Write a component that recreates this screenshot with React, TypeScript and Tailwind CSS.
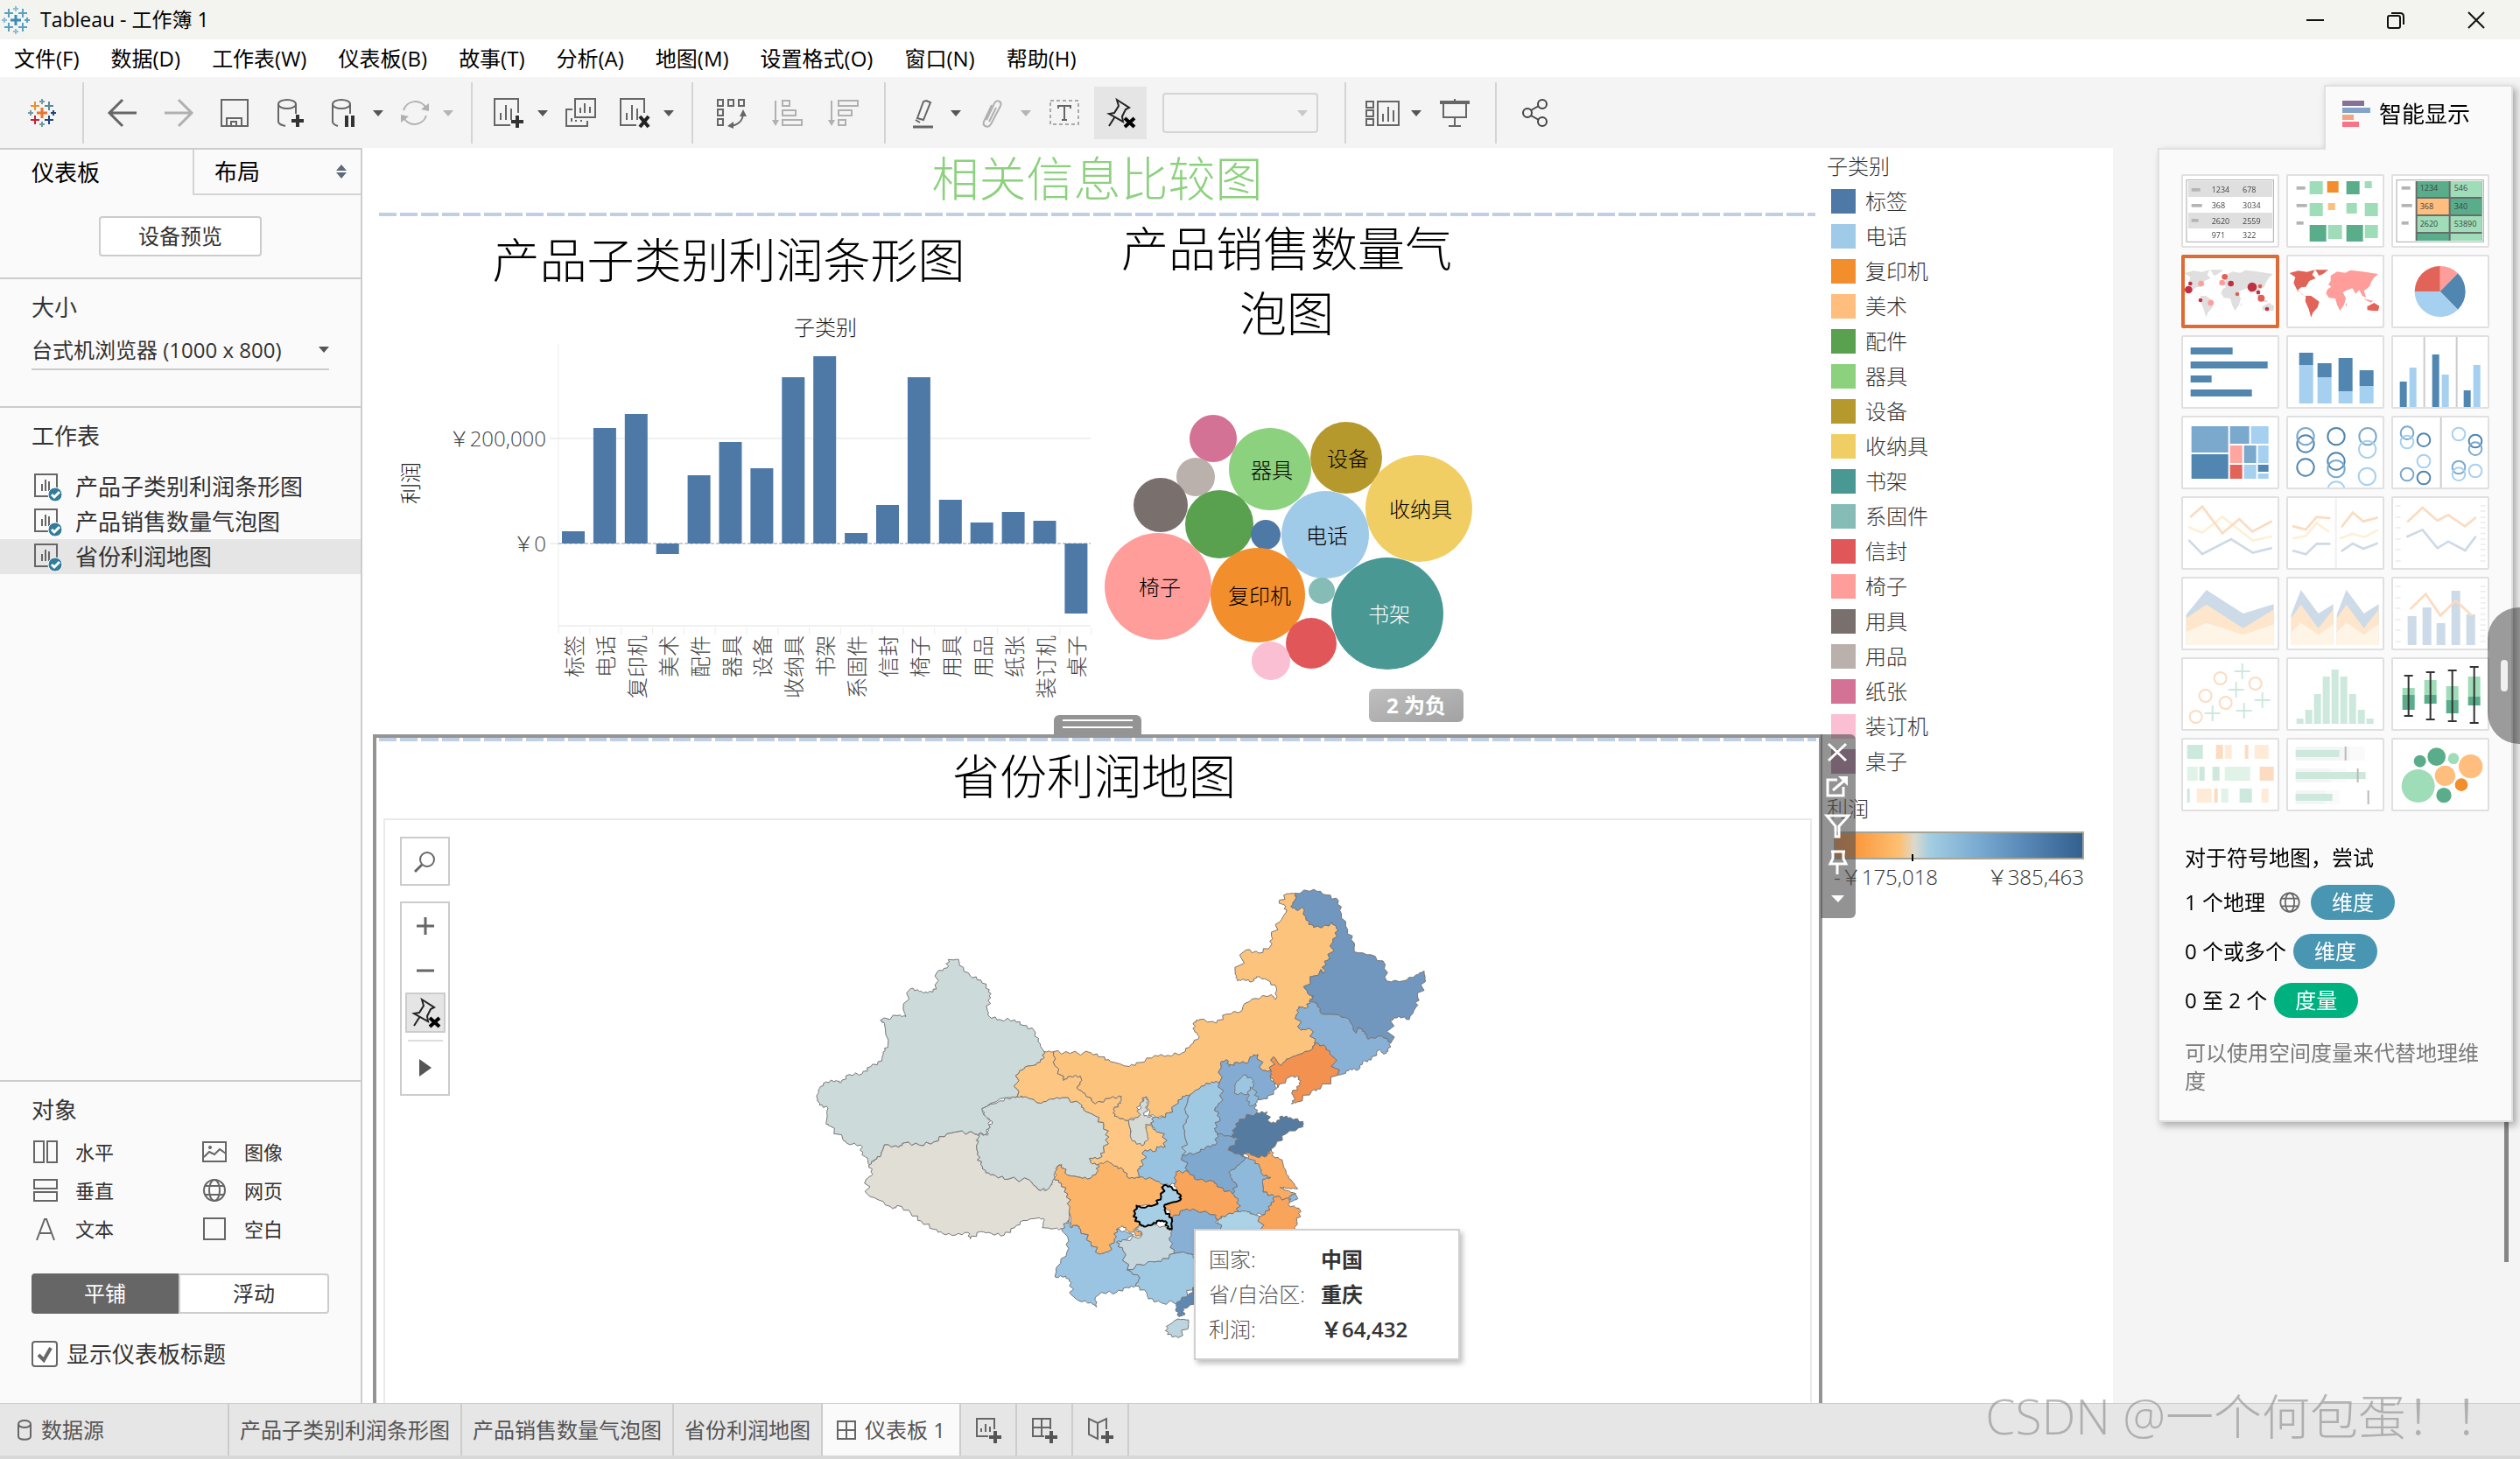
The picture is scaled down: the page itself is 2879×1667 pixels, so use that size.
import { useState } from "react";
import type { ReactNode } from "react";

const DARK = "#59ad8a";
const MINT = "#9fdcb8";
const NAVY = "#5086b0";
const MID = "#7ba9ce";
const SKY = "#a6d0f0";
const PEACH = "#fbdcc0";
const CREAM = "#ffebd8";
const PALE = "#cddae8";
const SAGE = "#cde8dc";

const categories = [
  { name: "标签", color: "#4e79a7", y: 607 },
  { name: "电话", color: "#a0cbe8", y: 489 },
  { name: "复印机", color: "#f28e2b", y: 473 },
  { name: "美术", color: "#ffbe7d", y: 633 },
  { name: "配件", color: "#59a14f", y: 543 },
  { name: "器具", color: "#8cd17d", y: 505 },
  { name: "设备", color: "#b6992d", y: 535 },
  { name: "收纳具", color: "#f1ce63", y: 431 },
  { name: "书架", color: "#499894", y: 407 },
  { name: "系固件", color: "#86bcb6", y: 609 },
  { name: "信封", color: "#e15759", y: 577 },
  { name: "椅子", color: "#ff9d9a", y: 431 },
  { name: "用具", color: "#79706e", y: 571 },
  { name: "用品", color: "#bab0ac", y: 597 },
  { name: "纸张", color: "#d37295", y: 585 },
  { name: "装订机", color: "#fabfd2", y: 595 },
  { name: "桌子", color: "#b07aa1", y: 701 },
];

const bubbles = [
  { x: 1386, y: 501, r: 27, color: "#d37295" },
  { x: 1366, y: 545, r: 22, color: "#bab0ac" },
  { x: 1326, y: 577, r: 31, color: "#79706e" },
  { x: 1451, y: 536, r: 47, color: "#8cd17d", label: "器具" },
  { x: 1538, y: 523, r: 41, color: "#b6992d", label: "设备" },
  { x: 1621, y: 581, r: 61, color: "#f1ce63", label: "收纳具" },
  { x: 1393, y: 599, r: 39, color: "#59a14f" },
  { x: 1446, y: 611, r: 17, color: "#4e79a7" },
  { x: 1514, y: 611, r: 50, color: "#a0cbe8", label: "电话" },
  { x: 1323, y: 670, r: 61, color: "#ff9d9a", label: "椅子" },
  { x: 1437, y: 680, r: 54, color: "#f28e2b", label: "复印机" },
  { x: 1510, y: 675, r: 15, color: "#86bcb6" },
  { x: 1585, y: 701, r: 64, color: "#499894", label: "书架", light: true },
  { x: 1498, y: 735, r: 29, color: "#e15759" },
  { x: 1452, y: 755, r: 22, color: "#fabfd2" },
];

const provinces = [
  { name: "新疆", color: "#ccdada", d: "378,312 403,312 405,330 430,362 455,375 475,405 478,430 470,465 475,488 500,497 535,498 555,515 580,530 590,565 604,596 602,618 585,637 560,643 537,670 541,735 500,742 458,772 460,785 480,808 470,850 440,850 400,844 375,850 345,875 310,885 275,878 262,892 228,884 220,915 205,930 192,955 188,925 175,915 172,885 140,880 130,868 98,825 90,818 95,770 75,762 68,735 75,710 90,690 115,685 125,692 145,667 175,665 195,643 222,625 225,597 236,577 228,510 218,500 260,485 278,488 272,465 290,401 310,410 330,415 350,403 352,350 375,338" },
  { name: "西藏", color: "#e1ded6", d: "228,884 262,892 275,878 310,885 345,875 375,850 400,844 440,850 450,855 445,885 447,915 455,945 467,970 490,980 520,990 570,993 590,1022 610,1024 628,987 645,1003 660,1035 665,1075 663,1115 650,1145 628,1143 600,1140 605,1115 590,1110 555,1118 535,1140 510,1163 480,1158 455,1152 430,1175 425,1155 395,1163 365,1158 345,1145 315,1120 290,1095 260,1072 248,1082 215,1055 190,1040 185,990 200,975 192,945 205,930 220,915" },
  { name: "青海", color: "#cfdbdb", d: "458,772 500,748 530,736 560,735 597,756 620,742 648,738 690,758 698,777 725,795 745,825 757,860 745,900 735,925 712,925 715,940 732,945 728,970 712,988 690,985 660,978 645,945 637,950 630,985 615,1020 590,1022 570,993 520,990 490,980 467,970 455,945 447,915 445,885 452,850 470,855 472,835 482,812 465,795" },
  { name: "甘肃", color: "#fdc783", d: "604,596 627,596 630,640 650,685 665,672 690,672 693,685 682,710 700,725 725,757 760,740 787,735 785,755 768,775 770,795 795,808 803,810 812,865 835,887 845,870 840,820 855,825 870,845 888,850 890,890 870,890 868,903 842,900 838,945 825,960 828,985 805,988 790,960 770,950 755,935 745,945 732,945 715,940 712,925 735,925 745,900 757,860 745,825 725,795 698,777 690,758 648,738 620,742 597,756 560,735 541,735 537,670 560,643 585,637 602,618" },
  { name: "内蒙古", color: "#fcc37d", d: "627,596 665,602 715,600 740,612 760,627 805,642 830,630 865,608 895,608 930,600 950,575 970,550 958,530 958,505 970,497 1010,508 1035,480 1070,470 1075,450 1100,432 1140,420 1150,435 1152,400 1130,375 1105,365 1095,380 1075,373 1060,378 1055,358 1080,282 1110,292 1138,270 1140,240 1160,195 1175,165 1170,143 1158,138 1178,108 1195,107 1198,122 1186,148 1203,160 1213,150 1222,190 1240,213 1275,208 1282,195 1298,222 1285,258 1278,310 1265,318 1262,355 1256,343 1216,395 1230,422 1240,425 1230,440 1222,462 1205,457 1200,480 1210,530 1230,525 1242,570 1235,590 1205,605 1175,620 1162,640 1145,612 1140,657 1120,655 1108,605 1090,612 1085,630 1060,630 1040,642 1035,622 1020,630 1018,690 1000,690 975,703 948,730 930,735 915,760 890,800 850,795 848,740 835,740 825,800 795,808 770,795 768,775 785,755 787,735 760,740 725,757 700,725 682,710 693,685 690,672 665,672 650,685 630,640" },
  { name: "宁夏", color: "#d4dad6", d: "803,810 825,800 830,760 845,735 850,760 840,795 862,800 858,822 843,822 845,840 850,865 835,887 812,872" },
  { name: "黑龙江", color: "#7197bf", d: "1195,107 1240,95 1270,112 1298,130 1305,170 1320,220 1335,260 1335,288 1375,297 1408,327 1412,378 1450,378 1480,360 1500,347 1503,380 1485,430 1480,460 1465,497 1440,487 1420,500 1422,568 1400,548 1368,558 1360,535 1345,520 1340,540 1322,495 1290,482 1258,480 1248,447 1230,440 1240,425 1230,422 1216,395 1256,343 1262,355 1265,318 1278,310 1285,258 1298,222 1282,195 1275,208 1240,213 1222,190 1213,150 1203,160 1186,148 1198,122" },
  { name: "吉林", color: "#89b1d5", d: "1205,457 1222,462 1230,440 1248,447 1258,480 1290,482 1322,495 1340,540 1345,520 1360,535 1368,558 1400,548 1422,568 1415,595 1405,605 1395,590 1375,622 1355,628 1345,652 1325,650 1310,665 1295,670 1283,610 1268,582 1242,570 1230,525 1210,530 1200,480" },
  { name: "辽宁", color: "#f29150", d: "1145,612 1162,640 1175,620 1205,605 1235,590 1242,570 1268,582 1283,610 1295,670 1255,712 1235,718 1200,752 1187,757 1195,740 1188,725 1208,700 1205,675 1185,673 1155,708 1138,675 1140,657" },
  { name: "河北", color: "#84abd2", d: "1035,622 1040,642 1060,630 1085,630 1090,612 1108,605 1120,655 1140,657 1138,675 1153,710 1130,742 1108,745 1100,755 1105,785 1065,805 1052,835 1048,860 1012,850 1005,835 1018,800 1007,770 1025,745 1018,690 1020,630" },
  { name: "北京", color: "#9bc5e1", d: "1055,695 1075,668 1095,682 1098,700 1085,727 1053,725" },
  { name: "天津", color: "#92bcdc", d: "1090,705 1100,715 1108,745 1102,760 1090,765 1083,740" },
  { name: "山西", color: "#9fc8e2", d: "948,730 975,703 1000,690 1018,690 1025,745 1007,770 1018,800 1005,835 1012,850 1008,885 985,892 965,908 930,916 938,870 932,830 943,800 935,775" },
  { name: "陕西", color: "#98c3e0", d: "930,735 948,730 935,775 943,800 932,830 938,870 930,916 945,968 915,968 912,1005 888,1008 860,990 828,985 825,960 838,945 842,900 868,903 870,890 890,890 888,850 870,845 858,822 862,800 890,800 915,760" },
  { name: "河南", color: "#7fa8ce", d: "930,916 965,908 985,892 1008,885 1012,850 1048,860 1065,865 1038,900 1070,918 1080,925 1065,945 1040,970 1048,995 1058,1005 1048,1035 1015,1015 1005,998 965,993 945,968" },
  { name: "山东", color: "#557ba1", d: "1065,805 1105,785 1130,782 1137,815 1152,815 1165,795 1185,800 1215,812 1215,828 1175,850 1150,885 1135,905 1130,918 1105,922 1080,908 1070,918 1038,900 1065,865 1048,860 1052,835" },
  { name: "江苏", color: "#fbab61", d: "1080,908 1105,922 1130,918 1140,900 1145,920 1165,930 1175,975 1190,1000 1202,1020 1180,1018 1160,1015 1175,1025 1198,1035 1185,1055 1148,1045 1120,1030 1120,990 1138,985 1118,975 1112,950 1090,930" },
  { name: "安徽", color: "#8fb9db", d: "1070,918 1095,930 1112,950 1118,975 1138,985 1120,990 1120,1030 1148,1045 1140,1070 1125,1098 1095,1098 1080,1088 1062,1090 1062,1055 1048,1035 1058,1005 1048,995 1040,970 1065,945 1080,925" },
  { name: "浙江", color: "#f9a45b", d: "1148,1045 1185,1055 1180,1070 1205,1080 1210,1090 1200,1120 1195,1160 1120,1160 1112,1105 1125,1098 1140,1070" },
  { name: "上海", color: "#8fb9db", d: "1183,1042 1195,1035 1203,1050 1185,1060" },
  { name: "江西", color: "#abd2e7", d: "1015,1112 1035,1100 1062,1090 1080,1088 1095,1098 1112,1105 1120,1160 1020,1160" },
  { name: "湖南", color: "#88b0d4", d: "905,1110 935,1085 960,1085 1008,1100 1020,1145 1020,1200 960,1225 930,1215 910,1220 900,1180" },
  { name: "湖北", color: "#f9a45b", d: "915,968 945,968 965,993 1005,998 1015,1015 1048,1035 1062,1055 1062,1090 1035,1100 1010,1115 1008,1100 960,1085 935,1085 905,1110 888,1070 925,1055 918,1030 912,1005" },
  { name: "四川", color: "#fcb469", d: "645,945 660,978 690,985 712,988 728,970 732,945 755,935 770,950 790,960 805,988 828,985 860,990 888,1008 880,1045 865,1070 822,1072 815,1105 830,1130 815,1148 835,1155 830,1165 800,1148 790,1135 775,1145 770,1175 755,1215 735,1222 715,1185 690,1145 680,1130 667,1140 665,1075 660,1035 645,1003 628,987 635,950" },
  { name: "云南", color: "#9bc4e2", d: "663,1115 667,1140 680,1130 690,1145 715,1185 735,1222 755,1215 770,1175 775,1145 800,1155 815,1162 795,1178 775,1185 790,1210 800,1270 830,1295 820,1320 800,1325 775,1340 740,1340 725,1355 728,1385 715,1372 685,1365 670,1350 668,1310 655,1290 630,1292 635,1260 658,1215 660,1170 645,1145" },
  { name: "贵州", color: "#c6d7de", d: "830,1133 860,1130 895,1142 905,1150 900,1180 910,1220 880,1245 850,1245 800,1270 790,1210 775,1185 795,1178 835,1165 835,1155 820,1145" },
  { name: "广西", color: "#9fc9e3", d: "800,1270 850,1245 880,1245 910,1220 930,1215 955,1225 970,1250 970,1310 925,1370 880,1372 850,1360 845,1340 820,1320 830,1295" },
  { name: "广东", color: "#5f88b3", d: "970,1310 945,1345 917,1370 915,1390 922,1415 935,1410 930,1390 970,1370" },
  { name: "海南", color: "#bdd5df", d: "892,1445 920,1422 945,1425 945,1440 920,1480 895,1470" },
  { name: "重庆", color: "#a6cfe6", d: "888,1008 905,1015 925,1038 925,1055 888,1070 890,1090 905,1110 905,1145 895,1142 890,1120 875,1118 860,1130 840,1137 830,1130 815,1105 822,1072 835,1078 865,1070 880,1045", active: true },
];

// Breaks every edge in four so that the borders look like a coast line.
// Endpoints are sorted first, so two neighbours bend a shared edge the same way.
function roughen(points: string) {
  const pts = points.split(" ").map((p) => p.split(",").map(Number));
  const out: string[] = [];
  pts.forEach((a, i) => {
    const b = pts[(i + 1) % pts.length];
    const swap = a[0] > b[0] || (a[0] === b[0] && a[1] > b[1]);
    const [p, q] = swap ? [b, a] : [a, b];
    const dx = q[0] - p[0];
    const dy = q[1] - p[1];
    const mids = [0.25, 0.5, 0.75].map((t, k) => {
      const n = Math.sin(p[0] * 12.9 + p[1] * 78.2 + q[0] * 3.7 + k * 41) * 0.13;
      return `${(p[0] + dx * t - dy * n).toFixed(0)},${(p[1] + dy * t + dx * n).toFixed(0)}`;
    });
    out.push(a.join(","), ...(swap ? mids.reverse() : mids));
  });
  return out.join(" ");
}

function Svg({ w = 36, h = 36, stroke = "#666", children }: { w?: number; h?: number; stroke?: string; children: ReactNode }) {
  return (
    <svg width={w} height={h} viewBox={`0 0 ${w} ${h}`} fill="none" stroke={stroke} strokeWidth="2" className="shrink-0">
      {children}
    </svg>
  );
}

function Caret({ color = "#555" }: { color?: string }) {
  return (
    <svg width="12" height="8" viewBox="0 0 12 8">
      <path d="M0 1h12L6 8z" fill={color} />
    </svg>
  );
}

function ToolButton({ label, active, children }: { label: string; active?: boolean; children: ReactNode }) {
  return (
    <button aria-label={label} className={`flex size-[60px] items-center justify-center ${active ? "bg-[#e5e5e5]" : ""}`}>
      {children}
    </button>
  );
}

function SplitButton({ label, muted, children }: { label: string; muted?: boolean; children: ReactNode }) {
  return (
    <div className="flex h-[60px] items-center">
      <button aria-label={label} className="flex h-full w-14 items-center justify-center">{children}</button>
      <button aria-label={`${label}选项`} className="flex h-full w-5 items-center justify-center">
        <Caret color={muted ? "#b4b4b4" : "#555"} />
      </button>
    </div>
  );
}

function Separator() {
  return <div className="mr-2.5 ml-3 h-[70px] w-0.5 bg-[#d4d4d4]" />;
}

function Plus({ x, y, r, color, w = 3 }: { x: number; y: number; r: number; color: string; w?: number }) {
  return <path d={`M${x - r} ${y}h${r * 2}M${x} ${y - r}v${r * 2}`} stroke={color} strokeWidth={w} />;
}

function Logo({ blue }: { blue?: boolean }) {
  const c = blue
    ? ["#3b8bb5", "#5aa0c4", "#5aa0c4", "#5aa0c4", "#5aa0c4", "#8bbdd6"]
    : ["#e8762c", "#eb912c", "#59879b", "#c72035", "#1f457e", "#7199a6"];
  return (
    <Svg>
      <Plus x={18} y={18} r={6} color={c[0]} />
      <Plus x={10} y={10} r={5} color={c[1]} w={2} />
      <Plus x={26} y={10} r={5} color={c[2]} w={2} />
      <Plus x={10} y={26} r={5} color={c[3]} w={2} />
      <Plus x={26} y={26} r={5} color={c[4]} w={2} />
      <Plus x={18} y={5} r={3} color={c[5]} w={2} />
      <Plus x={18} y={31} r={3} color={c[5]} w={2} />
      <Plus x={5} y={18} r={3} color={c[5]} w={2} />
      <Plus x={31} y={18} r={3} color={c[4]} w={2} />
    </Svg>
  );
}

function PinOff() {
  return (
    <Svg stroke="#222">
      <path d="M14 3l14 9-4 2-4 8 1 6L5 19l6-1 5-8zM12 22L5 33" />
      <path d="M23 24l11 10M34 24L23 34" strokeWidth="4" stroke="#000" />
    </Svg>
  );
}

function Globe({ size = 28 }: { size?: number }) {
  return (
    <svg width={size} height={size} viewBox="0 0 28 28" fill="none" stroke="#666" strokeWidth="2">
      <circle cx="14" cy="14" r="12.5" />
      <ellipse cx="14" cy="14" rx="6" ry="12.5" />
      <path d="M3 9h22M3 19h22" />
    </svg>
  );
}

function Toolbar() {
  return (
    <div role="toolbar" className="flex h-[81px] items-center gap-1 bg-[#f4f4f4] pl-[18px]">
      <ToolButton label="起始页"><Logo /></ToolButton>
      <Separator />
      <ToolButton label="撤消"><Svg><path d="M34 18H4M18 3L3 18l15 15" strokeWidth="3" /></Svg></ToolButton>
      <ToolButton label="重做"><Svg stroke="#b0b0b0"><path d="M2 18h30M18 3l15 15-15 15" strokeWidth="3" /></Svg></ToolButton>
      <ToolButton label="保存"><Svg><path d="M3 3h30v30H3zM9 33V24h17v9M14 33v-5h6v5" /></Svg></ToolButton>
      <ToolButton label="新建数据源">
        <Svg><ellipse cx="14" cy="8" rx="10" ry="5" /><path d="M4 8v20c0 3 4 4 8 5M24 8v11" /><Plus x={26} y={27} r={7} color="#333" w={4} /></Svg>
      </ToolButton>
      <SplitButton label="暂停自动更新">
        <Svg><ellipse cx="14" cy="8" rx="10" ry="5" /><path d="M4 8v20c0 3 3 4 6 5M24 8v11" /><path d="M20 21v13M27 21v13" strokeWidth="4" stroke="#333" /></Svg>
      </SplitButton>
      <SplitButton label="运行更新" muted>
        <Svg stroke="#b0b0b0"><path d="M5 15A14 14 0 0131 13M31 21A14 14 0 015 23" /><path d="M34 7v9l-9-2zM2 29v-9l9 2z" fill="#b0b0b0" stroke="none" /></Svg>
      </SplitButton>
      <Separator />
      <SplitButton label="新建工作表">
        <Svg><path d="M28 18V2H1v30h18M8 26v-8M14 26V9M20 26V13" /><Plus x={27} y={28} r={7} color="#333" w={4} /></Svg>
      </SplitButton>
      <ToolButton label="复制"><Svg><path d="M11 2h23v21H11zM17 18v-6M22 18V7M28 18V11M8 14H1v19h24v-6M7 28v-4M12 28v-2M18 28v-2" /></Svg></ToolButton>
      <SplitButton label="清除">
        <Svg><path d="M28 18V2H1v30h18M8 26v-8M14 26V9M20 26V13" /><path d="M23 22l10 12M33 22L23 34" strokeWidth="4" stroke="#222" /></Svg>
      </SplitButton>
      <Separator />
      <ToolButton label="交换行和列">
        <Svg><path d="M2 3h6v7H2zM14 3h6v7h-6zM26 3h6v7h-6zM2 14h6v7H2zM2 25h6v7H2zM31 18c0 9-6 14-15 15" /><path d="M31 14l4 8h-8zM13 33l7-5v8z" fill="#666" stroke="none" /></Svg>
      </ToolButton>
      <ToolButton label="升序排序"><Svg stroke="#b0b0b0"><path d="M4 4v26M12 4h8v6h-8zM12 15h15v6H12zM12 26h22v6H12z" /><path d="M0 26h8l-4 7z" fill="#b0b0b0" stroke="none" /></Svg></ToolButton>
      <ToolButton label="降序排序"><Svg stroke="#b0b0b0"><path d="M4 4v26M12 4h22v6H12zM12 15h15v6H12zM12 26h8v6h-8z" /><path d="M0 26h8l-4 7z" fill="#b0b0b0" stroke="none" /></Svg></ToolButton>
      <Separator />
      <SplitButton label="突出显示">
        <Svg><path d="M22 4l5 2-8 20-7-2 7-19zM10 26l5 3" /><path d="M7 34h23" strokeWidth="3" /></Svg>
      </SplitButton>
      <SplitButton label="组成员" muted>
        <Svg stroke="#b0b0b0"><path d="M11 26l9-19c3-5 9-2 7 3L16 31c-3 5-10 2-8-3l9-19M22 12l-8 16" /></Svg>
      </SplitButton>
      <ToolButton label="显示标记标签">
        <Svg><rect x="2" y="4" width="32" height="27" strokeDasharray="4 3" stroke="#aaa" /><path d="M11 13V10h14v3M18 10v16M15 26h6" /></Svg>
      </ToolButton>
      <ToolButton label="固定轴" active><PinOff /></ToolButton>
      <div className="relative mx-3.5">
        <select aria-label="适合" disabled className="block h-[46px] w-[178px] appearance-none rounded-sm border-2 border-[#d4d4d4] bg-[#f4f4f4]" />
        <div className="pointer-events-none absolute top-[19px] right-3"><Caret color="#c8c8c8" /></div>
      </div>
      <Separator />
      <SplitButton label="显示/隐藏卡">
        <Svg w={40}><path d="M1 5h8v7H1zM1 15h8v7H1zM1 25h8v7H1zM14 5h24v27H14zM20 28v-9M26 28V11M32 28V15" /></Svg>
      </SplitButton>
      <ToolButton label="演示模式"><Svg><path d="M1 6h34" strokeWidth="4" /><path d="M5 7v16h26V7M18 2v3M18 23v9M11 33h14" /></Svg></ToolButton>
      <Separator />
      <ToolButton label="共享"><Svg stroke="#444"><circle cx="9" cy="18" r="5" /><circle cx="26" cy="8" r="5" /><circle cx="26" cy="28" r="5" /><path d="M13 15l9-5M13 21l9 5" /></Svg></ToolButton>
    </div>
  );
}

const sheetNames = ["产品子类别利润条形图", "产品销售数量气泡图", "省份利润地图"];

const objects: { name: string; icon: ReactNode }[] = [
  { name: "水平", icon: <path d="M1 2h11v24H1zM16 2h11v24H16z" /> },
  { name: "图像", icon: <><path d="M1 3h26v22H1zM2 20l6-6 6 3 6-6 7 5" /><circle cx="9" cy="9" r="1" /></> },
  { name: "垂直", icon: <path d="M1 2h26v10H1zM1 16h26v10H1z" /> },
  { name: "网页", icon: <><circle cx="14" cy="14" r="12" /><ellipse cx="14" cy="14" rx="6" ry="12" /><path d="M3 9h22M3 19h22" /></> },
  { name: "文本", icon: <path d="M4 27L13 3h2l9 24M8 19h12" /> },
  { name: "空白", icon: <path d="M2 2h24v24H2z" /> },
];

function Sidebar() {
  const [showTitle, setShowTitle] = useState(true);

  return (
    <aside className="flex w-[414px] shrink-0 flex-col border-t-2 border-r-2 border-[#ccc] bg-[#fafafa] text-[26px] leading-10 text-[#333]">
      <div role="tablist" className="flex h-[52px]">
        <button role="tab" aria-selected="true" className="w-[220px] pl-9 text-left text-black">仪表板</button>
        <button role="tab" aria-selected="false" className="flex flex-1 items-center justify-between border-b-2 border-l-2 border-[#d4d4d4] pr-4 pl-[23px] text-black">
          布局
          <svg width="12" height="16" viewBox="0 0 12 16" fill="#5f6b7a"><path d="M6 0l6 7H0zM6 16l6-7H0z" /></svg>
        </button>
      </div>
      <div className="flex h-24 items-center justify-center border-b-2 border-[#ccc]">
        <button className="h-[46px] w-[186px] rounded-sm border-2 border-[#ccc] bg-white text-2xl">设备预览</button>
      </div>

      <div className="h-[147px] border-b-2 border-[#ccc] px-9 pt-3">
        <label htmlFor="size">大小</label>
        <div className="relative mt-2">
          <select id="size" className="h-11 w-full appearance-none border-b-2 border-[#ccc] bg-transparent text-2xl">
            <option>台式机浏览器 (1000 x 800)</option>
          </select>
          <div className="pointer-events-none absolute top-4 right-0"><Caret /></div>
        </div>
      </div>

      <h2 className="mt-3 h-[58px] pl-9">工作表</h2>
      <ul>
        {sheetNames.map((name, i) => (
          <li key={name} className={`flex h-10 items-center gap-[14px] pl-[38px] ${i === 2 ? "bg-[#e5e5e5]" : ""}`}>
            <Svg w={34} h={34}>
              <path d="M2 3h25v25H2zM10 22v-8M14 22V9M18 22V11" />
              <circle cx="25" cy="26" r="8" fill="#317c9b" stroke="#fff" strokeWidth="1" />
              <path d="M21 26l3 3 6-6" stroke="#fff" strokeWidth="3" />
            </Svg>
            {name}
          </li>
        ))}
      </ul>

      <div className="mt-auto h-[369px] border-t-2 border-[#ccc] px-9">
        <h2 className="mt-3">对象</h2>
        <ul className="mt-1.5 grid grid-cols-[193px_1fr] pl-0.5 text-[22px]">
          {objects.map((o) => (
            <li key={o.name} className="flex h-11 items-center gap-5">
              <Svg w={28} h={28}>{o.icon}</Svg>
              {o.name}
            </li>
          ))}
        </ul>
        <div className="mt-[29px] flex h-[46px] text-2xl">
          <button className="flex-1 rounded-l-sm bg-[#666] text-white">平铺</button>
          <button className="flex-1 rounded-r-sm border-2 border-[#ccc] bg-white">浮动</button>
        </div>
        <label className="mt-[26px] flex items-center gap-2.5">
          <span className="relative size-[30px]">
            <input
              type="checkbox"
              checked={showTitle}
              onChange={() => setShowTitle(!showTitle)}
              className="block size-[30px] appearance-none rounded-sm border-2 border-[#666] bg-white"
            />
            {showTitle && (
              <svg viewBox="0 0 30 30" fill="none" stroke="#666" strokeWidth="4" className="pointer-events-none absolute inset-0">
                <path d="M8 16l6 6 8-14" />
              </svg>
            )}
          </span>
          显示仪表板标题
        </label>
      </div>
    </aside>
  );
}

function DashedRule() {
  return <div className="h-1 bg-[repeating-linear-gradient(90deg,#c1cfe5_0_20px,transparent_20px_24px)]" />;
}

function BarChart() {
  return (
    <svg viewBox="433 347 815 492" className="block w-full text-2xl font-light">
      <text x="943" y="383" textAnchor="middle" fill="#222">子类别</text>
      <text transform="translate(478 552) rotate(-90)" textAnchor="middle" fill="#222">利润</text>
      <text x="624" y="510" textAnchor="end" fill="#444">￥200,000</text>
      <text x="624" y="630" textAnchor="end" fill="#444">￥0</text>
      <path d="M628 501h618M628 621h10M638 715h608" stroke="#f0f0f0" strokeWidth="2" />
      <path d="M638 393v331" stroke="#ececec" />
      <path d="M638 621h608" stroke="#ccc" strokeWidth="2" strokeDasharray="4 2" />
      {categories.map((c, i) => (
        <g key={c.name}>
          <rect x={642 + i * 35.9} y={Math.min(c.y, 621)} width="26" height={Math.abs(621 - c.y)} fill="#4e79a7" />
          <path d={`M${674 + i * 35.8} 717v8`} stroke="#ececec" />
          <text transform={`translate(${665 + i * 35.9} 726) rotate(-90)`} textAnchor="end" fill="#444">{c.name}</text>
        </g>
      ))}
    </svg>
  );
}

function BubbleChart() {
  return (
    <svg viewBox="1248 397 432 442" className="block w-full overflow-visible text-2xl font-light">
      {bubbles.map((b) => (
        <g key={`${b.x}-${b.y}`}>
          <circle cx={b.x} cy={b.y} r={b.r} fill={b.color} />
          {b.label && (
            <text x={b.x + 2} y={b.y + 10} textAnchor="middle" fill={b.light ? "#fff" : "#000"}>{b.label}</text>
          )}
        </g>
      ))}
    </svg>
  );
}

function MapTooltip() {
  const rows = [
    ["国家:", "中国"],
    ["省/自治区:", "重庆"],
    ["利润:", "￥64,432"],
  ];
  return (
    <dl className="absolute top-[423px] left-[464px] grid w-[304px] grid-cols-[128px_1fr] border-2 border-[#d0d0d0] bg-white px-[15px] py-[13px] text-2xl leading-10 whitespace-nowrap shadow-[3px_4px_6px_rgba(0,0,0,0.25)]">
      {rows.map(([k, v]) => (
        <div key={k} className="contents">
          <dt className="font-light text-[#555]">{k}</dt>
          <dd className="font-semibold text-[#333]">{v}</dd>
        </div>
      ))}
    </dl>
  );
}

function ProvinceMap() {
  return (
    <div className="flex">
      <div className="mt-[19px] ml-[17px] w-[57px] shrink-0">
        <button aria-label="搜索" className="flex h-14 w-full items-center justify-center border-2 border-[#ccc] bg-white">
          <Svg w={28} h={28}><circle cx="16" cy="12" r="8" /><path d="M10 18l-8 8" strokeWidth="3" /></Svg>
        </button>
        <div className="mt-[18px] flex flex-col items-center border-2 border-[#ccc] bg-white">
          <button aria-label="放大" className="flex h-[52px] items-center"><Svg w={24} h={24}><path d="M2 12h20M12 2v20" strokeWidth="3" /></Svg></button>
          <button aria-label="缩小" className="flex h-[50px] items-center"><Svg w={24} h={24}><path d="M2 12h20" strokeWidth="3" /></Svg></button>
          <button aria-label="重置缩放" className="flex size-[46px] items-center justify-center border-2 border-[#ccc] bg-[#e5e5e5]"><PinOff /></button>
          <div className="mt-2 h-0.5 w-10 bg-[#ddd]" />
          <button aria-label="展开" className="flex h-[60px] items-center">
            <svg width="14" height="20" viewBox="0 0 14 20"><path d="M0 0l14 10L0 20z" fill="#555" /></svg>
          </button>
        </div>
      </div>
      <div className="relative mt-11 ml-[386px] h-[580px] w-[760px]">
        <svg viewBox="0 0 1568 1568" preserveAspectRatio="none" className="size-full">
          {provinces.map((p) => (
            <polygon
              key={p.name}
              points={roughen(p.d)}
              fill={p.color}
              stroke={p.active ? "#000" : "#777"}
              strokeWidth={p.active ? 2 : 1}
              strokeLinejoin="round"
              vectorEffect="non-scaling-stroke"
            />
          ))}
        </svg>
        <MapTooltip />
      </div>
    </div>
  );
}

function ZoneMenu() {
  return (
    <div className="absolute -top-1 left-full z-10 ml-0.5 h-[210px] w-10 rounded-r-md bg-[#505050]/62">
      <svg width="40" height="210" viewBox="0 0 40 210" fill="none" stroke="#fff" strokeWidth="3">
        <path d="M9 11l20 19M29 11L9 30" />
        <path d="M19 52H8v18h18V60M14 64l14-12" />
        <path d="M20 48h11v11z" fill="#fff" stroke="none" />
        <path d="M7 93h25l-11 12v12h-4v-12z" />
        <path d="M12 134h16M14 134v8l-3 6h18l-3-6v-8M19 148v12" />
        <path d="M12 184h15l-7 8z" fill="#fff" stroke="none" />
      </svg>
    </div>
  );
}

function Dashboard() {
  return (
    <main className="flex min-w-0 flex-1 flex-col">
      <div className="pr-2 pl-[19px]">
        <h1 className="h-[74px] text-center text-[54px] leading-[70px] font-light text-[#8cd17d]">相关信息比较图</h1>
        <DashedRule />
        <div className="grid h-[592px] grid-cols-[815fr_432fr_394fr] text-center">
          <section>
            <h2 className="pr-4 text-[54px] leading-[100px] font-light text-black">产品子类别利润条形图</h2>
            <BarChart />
          </section>
          <section className="relative">
            <h2 className="pr-5 pl-8 text-[54px] leading-[74px] font-light text-black">产品销售数量气泡图</h2>
            <div className="mt-0.5">
              <BubbleChart />
            </div>
            <button className="absolute right-2 bottom-3.5 h-[38px] w-[108px] rounded-md bg-linear-to-br from-[#bfbfbf] to-[#a2a2a2] text-2xl font-bold text-white">2 为负</button>
          </section>
        </div>
      </div>

      <section className="relative ml-3 flex flex-1 flex-col border-4 border-b-0 border-[#949494] px-[3px]">
        <div className="absolute -top-[26px] left-1/2 flex h-[26px] w-[100px] -translate-x-1/2 flex-col gap-1.5 rounded-t-md bg-[#949494] px-2.5 pt-[5px]">
          <div className="h-0.5 bg-white" />
          <div className="h-0.5 bg-white" />
        </div>
        <ZoneMenu />
        <DashedRule />
        <h2 className="pr-2 text-center text-[54px] leading-[80px] font-light text-black">省份利润地图</h2>
        <div className="mx-[5px] mt-2 flex-1 border-2 border-b-0 border-[#eaeaea]">
          <ProvinceMap />
        </div>
      </section>
    </main>
  );
}

function Legend() {
  return (
    <aside className="w-[332px] shrink-0 pt-px text-2xl leading-10 font-light text-[#333]">
      <h3 className="pl-[5px]">子类别</h3>
      <ul className="pl-2.5">
        {categories.map((c) => (
          <li key={c.name} className="flex h-10 items-center gap-[11px]">
            <span className="h-7 w-7" style={{ backgroundColor: c.color }} />
            {c.name}
          </li>
        ))}
      </ul>
      <h3 className="mt-3.5 mb-1.5 pl-[5px]">利润</h3>
      <div className="ml-[13px] w-[286px]">
        <div className="relative h-8 border-2 border-[#a6a698] bg-[linear-gradient(90deg,#f28536_0%,#fb9a40_9%,#fdc073_26%,#dcd9cc_32%,#a3cee2_38%,#7bacd2_57%,#5b8bb8_75%,#33608f_100%)]">
          <div className="absolute -bottom-1 left-[87px] h-2 w-0.5 bg-black" />
        </div>
        <div className="flex justify-between">
          <span>-￥175,018</span>
          <span>￥385,463</span>
        </div>
      </div>
    </aside>
  );
}

// x, y, w, h, fill
type Box = [number, number, number, number, string];

function Boxes({ list }: { list: Box[] }) {
  return <>{list.map(([x, y, w, h, c], i) => <rect key={i} x={x} y={y} width={w} height={h} fill={c} stroke="none" />)}</>;
}

function Dots({ list }: { list: [number, number, number, string][] }) {
  return <>{list.map(([x, y, r, c], i) => <circle key={i} cx={x} cy={y} r={r} fill={c} />)}</>;
}

function Rings({ r, list }: { r: number; list: [number, number, string][] }) {
  return <>{list.map(([x, y, c], i) => <circle key={i} cx={x} cy={y} r={r} fill="none" stroke={c} strokeWidth="6" />)}</>;
}

function Lines({ list }: { list: [string, string][] }) {
  return <>{list.map(([p, c], i) => <polyline key={i} points={p} fill="none" stroke={c} strokeWidth="8" strokeLinecap="round" />)}</>;
}

function Labels({ list }: { list: [number, number, string][] }) {
  return <>{list.map(([x, y, t], i) => <text key={i} x={x} y={y} fontSize="27" fill="#444">{t}</text>)}</>;
}

const americas = "M11 63l30-8 30 4 26-7-8 17 12 12-22 9-12 20-16 2-12 10 12 12 12 7h22l28 20-6 20-16 18-6 16-8-28-12-28 2-16-28-18-14-28 6-20zM98 52h46l-18 14-14 6-8-14z";
const oldWorld = "M152 72l22-14 28 4 18-9 40 5 55 8-14 12-9 14-8 18-18 14 8 24-14-8-10-20-12 14-12-19-14 5-18 8 10 22-6 22-14 20-10-20-6-22-22-2-10-16 6-14 12-8-10-8 8-12zM202 172l6-8-2 14zM262 150l36 8-8 6z";
const australia = "M277 178l24-13 18 11-4 17-20-1-17-2z";
const axisTicks: Box[] = [33, 72, 108, 147, 183, 222].map((y) => [14, y - 3, 18, 6, "#f0f0f0"] as Box)
  .concat([33, 51, 72, 90, 108, 128, 147, 165, 183, 203, 222].map((y) => [305, y - 3, 18, 6, "#f0f0f0"] as Box));
const tableMarks: Box[] = [[35, 42, 30, 11, "#b4b4b4"], [35, 102, 36, 11, "#b4b4b4"], [35, 162, 24, 11, "#b4b4b4"]];

function area(x: number[], shift: number[], color: string) {
  return <polygon points={`${x.map((v, i) => `${v},${shift[i]}`).join(" ")} ${x[3]},234 ${x[0]},234`} fill={color} />;
}

function Area({ x }: { x: number[] }) {
  return (
    <>
      {area(x, [130, 45, 126, 94], PALE)}
      {area(x, [142, 95, 176, 112], "#fde6cb")}
      {area(x, [189, 158, 199, 163], "#fef5e7")}
    </>
  );
}

const chartTypes: { name: string; art: ReactNode }[] = [
  {
    name: "文本表",
    art: (
      <>
        <rect x="18" y="20" width="298" height="212" fill="none" stroke="#aaa" strokeWidth="3" />
        <Boxes list={[[24, 24, 288, 54, "#dfdfdf"], [24, 132, 288, 54, "#dfdfdf"], [35, 48, 30, 11, "#b4b4b4"], [35, 102, 36, 11, "#b4b4b4"], [35, 153, 24, 11, "#b4b4b4"]]} />
        <Labels list={[[104, 62, "1234"], [210, 62, "678"], [104, 116, "368"], [210, 116, "3034"], [104, 170, "2620"], [210, 170, "2559"], [104, 218, "971"], [210, 218, "322"]]} />
      </>
    ),
  },
  {
    name: "热图",
    art: <Boxes list={[...tableMarks, [80, 24, 45, 45, MINT], [140, 24, 39, 39, "#f28e2b"], [206, 24, 45, 45, DARK], [269, 24, 24, 24, MINT], [80, 99, 45, 45, MINT], [143, 99, 24, 24, "#ffbe7d"], [206, 99, 36, 36, MINT], [269, 99, 45, 45, MINT], [80, 174, 57, 57, DARK], [143, 174, 48, 48, MINT], [206, 174, 57, 57, DARK], [269, 174, 45, 45, MINT]]} />,
  },
  {
    name: "突出显示表",
    art: (
      <>
        <rect x="18" y="20" width="298" height="212" fill="none" stroke="#aaa" strokeWidth="3" />
        <Boxes list={[...tableMarks, [83, 24, 228, 204, "#6b6b6b"], [89, 24, 108, 54, DARK], [203, 24, 108, 54, MINT], [89, 84, 108, 54, "#ffbe7d"], [203, 84, 108, 54, DARK], [89, 144, 108, 54, MINT], [203, 144, 108, 54, MINT], [89, 204, 108, 24, DARK], [203, 204, 108, 24, MINT]]} />
        <Labels list={[[98, 57, "1234"], [215, 57, "546"], [98, 120, "368"], [215, 120, "340"], [98, 180, "2620"], [215, 180, "53890"]]} />
      </>
    ),
  },
  {
    name: "符号地图",
    art: (
      <>
        <path d={americas + oldWorld + australia} fill="#dfdfdf" />
        <Dots list={[[25, 120, 13, "#c03040"], [31, 99, 7, "#c03040"], [68, 99, 10, "#ff9d9a"], [66, 156, 7, "#c03040"], [101, 165, 10, "#ff9d9a"], [149, 76, 10, "#e15f55"], [140, 96, 10, "#ff9d9a"], [170, 99, 10, "#c03040"], [192, 135, 7, "#e15f55"], [243, 111, 16, "#c03040"], [270, 108, 7, "#e15f55"], [264, 129, 7, "#c03040"], [274, 149, 12, "#e15f55"], [294, 186, 7, "#c03040"]]} />
      </>
    ),
  },
  {
    name: "地图",
    art: <><path d={americas + australia} fill="#e26358" /><path d={oldWorld} fill="#ff9d9a" /></>,
  },
  {
    name: "饼图",
    art: (
      <>
        <path d="M167 126V39A87 87 0 01228 64z" fill="#ff9d9a" />
        <path d="M167 126L228 64A87 87 0 01228 188z" fill={NAVY} />
        <path d="M167 126L228 188A87 87 0 0180 126z" fill={SKY} />
        <path d="M167 126H80A87 87 0 01167 39z" fill="#e26358" />
      </>
    ),
  },
  { name: "水平条", art: <Boxes list={[[32, 42, 144, 24, NAVY], [32, 90, 264, 24, NAVY], [32, 138, 72, 24, NAVY], [32, 186, 210, 24, NAVY]]} /> },
  {
    name: "堆叠条",
    art: <Boxes list={[[44, 60, 48, 42, NAVY], [44, 102, 48, 132, SKY], [107, 96, 48, 48, NAVY], [107, 144, 48, 90, SKY], [179, 78, 48, 114, NAVY], [179, 192, 48, 42, SKY], [251, 120, 48, 54, NAVY], [251, 174, 48, 60, SKY]]} />,
  },
  {
    name: "并排条",
    art: <Boxes list={[[110, 0, 6, 252, "#ccc"], [221, 0, 6, 252, "#ccc"], [29, 159, 24, 93, NAVY], [62, 111, 24, 141, SKY], [140, 66, 24, 186, NAVY], [173, 135, 24, 117, SKY], [248, 189, 24, 63, NAVY], [281, 102, 24, 150, SKY]]} />,
  },
  {
    name: "树状图",
    art: <Boxes list={[[35, 36, 126, 90, MID], [35, 132, 126, 84, NAVY], [167, 36, 66, 60, MID], [239, 36, 60, 60, SKY], [167, 102, 42, 60, "#ffa59f"], [215, 102, 42, 60, MID], [263, 102, 36, 60, SKY], [167, 168, 42, 48, "#e26358"], [215, 168, 42, 48, SKY], [263, 168, 36, 24, NAVY], [263, 198, 36, 18, SKY]]} />,
  },
  {
    name: "圆视图",
    art: <Rings r={29} list={[[66, 96, NAVY], [66, 71, MID], [66, 177, NAVY], [171, 71, NAVY], [171, 156, NAVY], [171, 182, MID], [171, 255, SKY], [279, 71, MID], [278, 115, SKY], [277, 208, SKY]]} />,
  },
  {
    name: "并排圆",
    art: (
      <>
        <Boxes list={[[167, 0, 6, 252, "#ccc"]]} />
        <Rings r={22} list={[[54, 59, MID], [54, 90, SKY], [111, 83, NAVY], [111, 156, SKY], [54, 201, MID], [111, 213, NAVY], [231, 63, SKY], [288, 87, NAVY], [288, 113, MID], [231, 177, MID], [231, 200, SKY], [288, 189, SKY]]} />
      </>
    ),
  },
  {
    name: "线(连续)",
    art: <Lines list={[["28,107 72,125 141,70 245,152 308,138", "#fdf0d5"], ["33,70 72,35 141,127 199,78 243,121 308,87", PEACH], ["27,152 72,198 171,147 245,194 308,178", PALE]]} />,
  },
  {
    name: "线(离散)",
    art: (
      <>
        <Boxes list={[[167, 0, 6, 252, "#f0f0f0"]]} />
        <Lines list={[["24,103 67,114 104,71 148,75", PEACH], ["24,144 67,136 104,92 144,120", "#fdf0d5"], ["24,187 67,199 104,163 148,163", PALE], ["191,103 228,56 264,86 311,74", PEACH], ["186,144 226,129 268,140 311,117", "#fdf0d5"], ["191,187 228,162 264,180 311,162", PALE]]} />
      </>
    ),
  },
  {
    name: "双线",
    art: <><Boxes list={axisTicks} /><Lines list={[["57,86 107,39 158,84 195,64 252,103 288,74", PEACH], ["55,138 107,115 158,178 195,155 253,186 288,140", PALE]]} /></>,
  },
  { name: "面积图(连续)", art: <Area x={[17, 86, 212, 317]} /> },
  { name: "面积图(离散)", art: <><Area x={[17, 50, 110, 161]} /><Area x={[173, 206, 266, 317]} /></> },
  {
    name: "双组合",
    art: (
      <>
        <Boxes list={[...axisTicks, [56, 135, 30, 99, PALE], [107, 105, 30, 129, PALE], [155, 159, 30, 75, PALE], [206, 48, 30, 186, PALE], [257, 129, 30, 105, PALE]]} />
        <Lines list={[["67,109 118,59 168,133 221,82 275,132", PEACH]]} />
      </>
    ),
  },
  {
    name: "散点图",
    art: (
      <>
        <Rings r={21} list={[[134, 72, PEACH], [254, 90, PEACH], [83, 132, PEACH], [152, 156, PEACH], [50, 204, PEACH]]} />
        {[[209, 48], [188, 111], [278, 147], [107, 192], [215, 183]].map(([x, y]) => <Plus key={x} x={x} y={y} r={27} color={SAGE} w={6} />)}
      </>
    ),
  },
  {
    name: "直方图",
    art: <Boxes list={[210, 180, 126, 66, 42, 66, 126, 180, 210].map((y, i) => [35 + i * 30, y, 24, 228 - y, SAGE] as Box)} />,
  },
  {
    name: "盒须图",
    art: (
      <>
        <Boxes list={[[38, 105, 42, 24, MINT], [38, 129, 42, 51, DARK], [113, 78, 42, 51, MINT], [113, 129, 42, 30, DARK], [188, 99, 42, 48, MINT], [188, 147, 42, 45, DARK], [263, 66, 42, 69, MINT], [263, 135, 42, 30, DARK]]} />
        <path d="M59 63v138M44 63h30M44 201h30M134 51v162M119 51h30M119 213h30M209 45v174M194 45h30M194 219h30M284 33v192M269 33h30M269 225h30" stroke="#333" strokeWidth="6" />
      </>
    ),
  },
  {
    name: "甘特图",
    art: <Boxes list={[[20, 24, 54, 48, SAGE], [119, 24, 24, 48, PEACH], [149, 24, 24, 48, CREAM], [218, 24, 12, 48, PEACH], [251, 24, 48, 48, CREAM], [20, 99, 36, 48, "#e1f3e8"], [62, 99, 18, 48, SAGE], [107, 99, 24, 48, SAGE], [149, 99, 87, 48, "#e1f3e8"], [269, 99, 48, 48, PEACH], [20, 174, 9, 48, SAGE], [53, 174, 51, 48, CREAM], [113, 174, 12, 48, PEACH], [137, 174, 24, 48, "#e1f3e8"], [200, 174, 42, 48, SAGE], [275, 174, 24, 48, CREAM]]} />,
  },
  {
    name: "标靶图",
    art: <Boxes list={[[32, 30, 186, 48, "#f5f5f5"], [218, 30, 52, 48, "#fafafa"], [32, 105, 120, 48, "#f5f5f5"], [152, 105, 54, 48, "#fafafa"], [32, 180, 102, 48, "#f5f5f5"], [134, 180, 48, 48, "#fafafa"], [32, 42, 150, 24, SAGE], [32, 117, 240, 24, SAGE], [32, 192, 126, 24, SAGE], [200, 30, 6, 48, "#bbb"], [242, 105, 6, 48, "#bbb"], [278, 180, 6, 48, "#bbb"]]} />,
  },
  {
    name: "填充气泡图",
    art: <Dots list={[[92, 165, 57, MINT], [98, 80, 21, DARK], [155, 65, 31, DARK], [213, 71, 19, MINT], [272, 98, 41, "#ffbe7d"], [184, 130, 35, "#ffbe7d"], [240, 161, 22, "#f28e2b"], [180, 197, 26, DARK]]} />,
  },
];

function ShowMe() {
  const [selected, setSelected] = useState("符号地图");

  return (
    <div className="mr-2 ml-[51px] drop-shadow-[4px_4px_4px_rgba(0,0,0,0.3)]">
      <div className="flex h-[74px] text-[26px] text-black">
        <div className="flex-1 border-b-2 border-[#e0e0e0]" />
        <button className="flex w-[216px] items-center gap-2.5 border-2 border-b-0 border-[#e0e0e0] bg-[#fafafa] pb-2.5 pl-[19px]">
          <Svg w={32} h={30}>
            <Boxes list={[[0, 0, 25, 6, "#857096"], [0, 8, 32, 6, "#83a3ca"], [0, 16, 13, 6, "#f0a680"], [0, 24, 19, 6, "#fa7285"]]} />
          </Svg>
          智能显示
        </button>
      </div>
      <div className="border-2 border-t-0 border-[#e0e0e0] bg-[#fafafa] px-[25px] pt-7 pb-[29px]">
        <div className="grid grid-cols-3 gap-2">
          {chartTypes.map((c) => (
            <button
              key={c.name}
              aria-label={c.name}
              onClick={() => setSelected(c.name)}
              className={`h-[84px] w-[112px] overflow-hidden rounded-xs bg-white ${selected === c.name ? "border-4 border-[#de6b35]" : "border-2 border-[#e0e0e0]"}`}
            >
              <svg
                viewBox={selected === c.name ? "12 12 312 228" : "6 6 324 240"}
                className="block size-full"
              >
                {c.art}
              </svg>
            </button>
          ))}
        </div>
        <div className="mt-[33px] pl-1 text-2xl leading-10 text-black">
          <p>对于符号地图，尝试</p>
          <p className="mt-[11px] flex items-center">
            1 个地理
            <span className="mx-3 pl-1"><Globe size={24} /></span>
            <span className="h-10 w-24 rounded-full bg-[#4996b2] text-center text-white">维度</span>
          </p>
          <p className="mt-4 flex items-center gap-2">
            0 个或多个
            <span className="h-10 w-24 rounded-full bg-[#4996b2] text-center text-white">维度</span>
          </p>
          <p className="mt-4 flex items-center gap-2">
            0 至 2 个
            <span className="h-10 w-24 rounded-full bg-[#00b180] text-center text-white">度量</span>
          </p>
          <p className="mt-6 leading-8 text-[#7a7a7a]">可以使用空间度量来代替地理维度</p>
        </div>
      </div>
    </div>
  );
}

function SheetTabs() {
  return (
    <footer className="flex h-16 border-t border-b-4 border-t-[#ccc] border-b-[#d8d8d8] bg-[#e6e6e6] text-2xl text-[#555]">
      <button className="flex w-[262px] items-center gap-2.5 border-r-2 border-[#ccc] pl-[19px]">
        <Svg w={18} h={24}><ellipse cx="9" cy="5" rx="7" ry="4" /><path d="M2 5v14c0 5 14 5 14 0V5" /></Svg>
        数据源
      </button>
      {sheetNames.map((name) => (
        <button key={name} className="border-r-2 border-[#ccc] px-3">{name}</button>
      ))}
      <button className="flex items-center gap-2.5 border-r-2 border-[#ccc] bg-[#fafafa] px-4">
        <Svg w={22} h={24}><path d="M1 2h20v20H1zM11 2v20M1 12h20" /></Svg>
        仪表板 1
      </button>
      <button aria-label="新建工作表" className="flex w-16 items-center justify-center border-r-2 border-[#ccc]">
        <Svg w={30} h={30}><path d="M22 14V2H2v20h13M7 17v-4M12 17V8M17 17v-6" /><Plus x={23} y={23} r={7} color="#555" w={4} /></Svg>
      </button>
      <button aria-label="新建仪表板" className="flex w-16 items-center justify-center border-r-2 border-[#ccc]">
        <Svg w={30} h={30}><path d="M22 14V2H2v20h13M12 2v20M2 12h20" /><Plus x={23} y={23} r={7} color="#555" w={4} /></Svg>
      </button>
      <button aria-label="新建故事" className="flex w-16 items-center justify-center border-r-2 border-[#ccc]">
        <Svg w={30} h={30}><path d="M22 14V2l-10 5L2 2v18l10 5V7" /><Plus x={23} y={23} r={7} color="#555" w={4} /></Svg>
      </button>
    </footer>
  );
}

const menus = ["文件(F)", "数据(D)", "工作表(W)", "仪表板(B)", "故事(T)", "分析(A)", "地图(M)", "设置格式(O)", "窗口(N)", "帮助(H)"];

export default function App() {
  return (
    <div className="relative flex h-screen flex-col overflow-hidden bg-white font-['Open_Sans','Noto_Sans_CJK_SC',sans-serif]">
      <header className="flex h-[45px] items-center bg-[#f3f4ef] pr-1 text-[23px] text-black">
        <Logo blue />
        <span className="ml-2.5">Tableau - 工作簿 1</span>
        <div className="ml-auto flex">
          <button aria-label="最小化" className="flex w-[92px] justify-center"><Svg w={22} h={22} stroke="#111"><path d="M1 11h20" /></Svg></button>
          <button aria-label="还原" className="flex w-[92px] justify-center"><Svg w={22} h={22} stroke="#111"><rect x="2" y="6" width="14" height="14" rx="2" /><path d="M6 3h10c2 0 4 1 4 4v9" /></Svg></button>
          <button aria-label="关闭" className="flex w-[92px] justify-center"><Svg w={22} h={22} stroke="#111"><path d="M2 2l18 18M20 2L2 20" /></Svg></button>
        </div>
      </header>
      <nav className="flex h-[43px] items-center gap-9 pl-4 text-2xl text-black">
        {menus.map((m) => (
          <button key={m}>{m}</button>
        ))}
      </nav>

      <div className="flex min-h-0 flex-1">
        <div className="flex min-w-0 flex-1 flex-col">
          <Toolbar />
          <div className="flex min-h-0 flex-1">
            <Sidebar />
            <Dashboard />
            <Legend />
          </div>
        </div>
        <div className="relative w-[465px] shrink-0 bg-[#f4f4f4] pt-[9px]">
          <div className="absolute top-[1100px] right-[13px] h-[254px] w-[5px] bg-[#858585]" />
          <ShowMe />
          <div className="absolute top-[606px] right-0 flex h-[156px] w-[37px] items-center justify-center rounded-l-[36px] bg-black/38">
            <div className="h-9 w-2 rounded-full bg-[#f0f0f0]" />
          </div>
        </div>
      </div>
      <SheetTabs />
      <div className="pointer-events-none absolute right-5 bottom-2 text-[55px] font-light text-[#8a8a8a]/60">CSDN @一个何包蛋！！</div>
    </div>
  );
}
